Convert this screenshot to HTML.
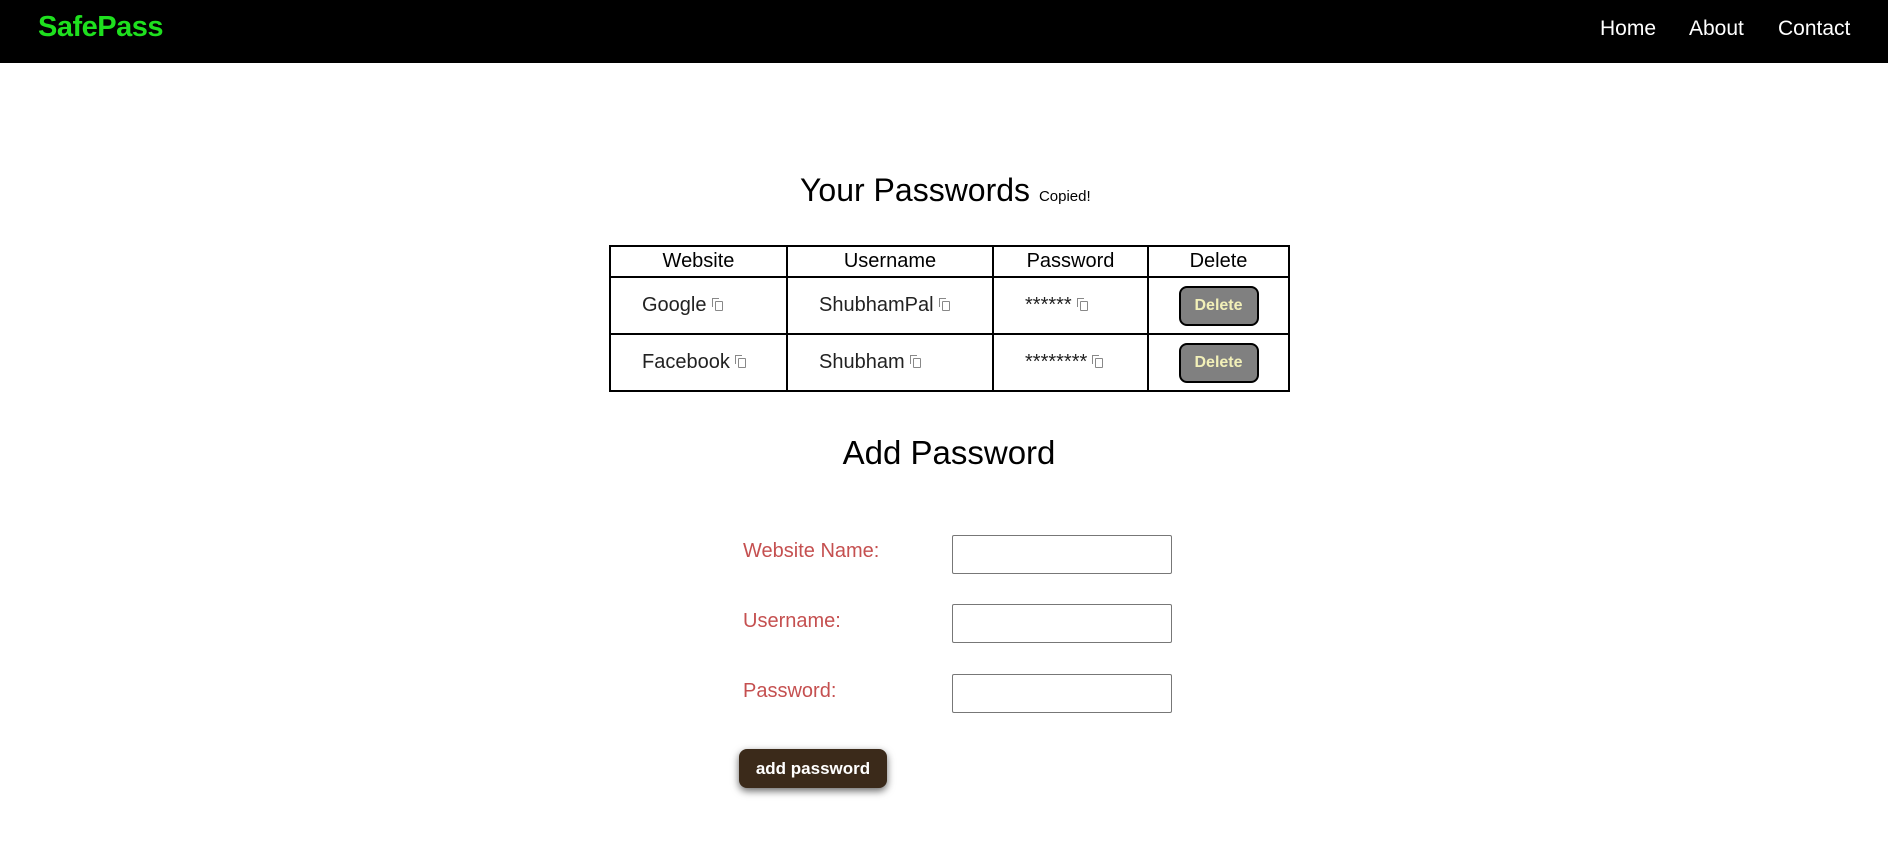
<!DOCTYPE html>
<html><head><meta charset="utf-8"><style>
*{box-sizing:border-box;margin:0;padding:0}
body{width:1900px;height:858px;background:#fff;font-family:"Liberation Sans",sans-serif;position:relative;overflow:hidden}
.nav{position:absolute;left:0;top:0;width:1888px;height:63px;background:#000}
.logo{position:absolute;left:38px;top:11px;color:#1ee01e;font-size:29px;font-weight:bold;letter-spacing:-0.5px}
.nl{position:absolute;top:17px;color:#fff;font-size:21px}
.a{position:absolute}
table{position:absolute;left:609px;top:245px;width:681px;border-collapse:collapse;table-layout:fixed}
td,th{border:2px solid #000;font-size:20px;height:57px;white-space:nowrap}
th{font-weight:normal;height:31px;text-align:center}
td{color:#222}
.ic{display:inline-block;width:8px;height:10px;border:1.5px solid #888;border-radius:1px;margin-left:8px;position:relative;vertical-align:middle}
.ic:before{content:"";position:absolute;left:-4px;top:-4px;width:6px;height:8px;border-left:1.5px solid #888;border-top:1.5px solid #888}
.del{display:inline-block;width:80px;height:40px;background:#808080;border:2px solid #000;border-radius:8px;color:#f2f0b8;font-weight:bold;font-size:16px;line-height:36px;text-align:center}
.lb{position:absolute;left:743px;color:#c55050;font-size:20px}
.in{position:absolute;left:952px;width:220px;height:39px;border:1px solid #777;border-radius:2px}
</style></head><body>
<div class="nav"><div class="logo">SafePass</div>
<div class="nl" style="left:1600px">Home</div><div class="nl" style="left:1689px">About</div><div class="nl" style="left:1778px">Contact</div></div>
<div class="a" style="left:800px;top:172px;font-size:32px">Your Passwords <span style="font-size:15px">Copied!</span></div>
<table>
<tr><th style="width:177px">Website</th><th style="width:206px">Username</th><th style="width:155px">Password</th><th>Delete</th></tr>
<tr><td style="padding-left:31px">Google<span class="ic"></span></td><td style="padding-left:31px">ShubhamPal<span class="ic"></span></td><td style="padding-left:31px">******<span class="ic"></span></td><td style="text-align:center"><span class="del">Delete</span></td></tr>
<tr><td style="padding-left:31px">Facebook<span class="ic"></span></td><td style="padding-left:31px">Shubham<span class="ic"></span></td><td style="padding-left:31px">********<span class="ic"></span></td><td style="text-align:center"><span class="del">Delete</span></td></tr>
</table>
<div class="a" style="left:0;width:1898px;text-align:center;top:434px;font-size:33px">Add Password</div>
<div class="lb" style="top:540px">Website Name:</div>
<div class="lb" style="top:610px">Username:</div>
<div class="lb" style="top:680px">Password:</div>
<div class="in" style="top:535px"></div>
<div class="in" style="top:604px"></div>
<div class="in" style="top:674px"></div>
<div class="a" style="left:739px;top:749px;width:148px;height:39px;background:#3b2a1a;border-radius:8px;color:#fff;font-weight:bold;font-size:17px;line-height:39px;text-align:center;box-shadow:0 3px 8px rgba(0,0,0,.6)">add password</div>
</body></html>
